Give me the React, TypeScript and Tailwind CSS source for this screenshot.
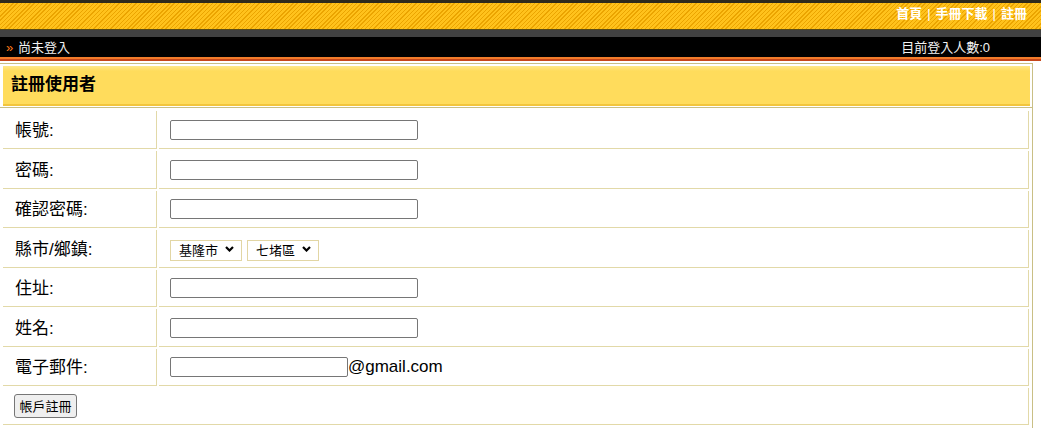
import { useState } from "react"

const font = "font-['Liberation_Sans','Noto_Sans_CJK_TC',sans-serif]"

function Chevron() {
  return (
    <svg width="9" height="6" viewBox="0 0 9 6" className="pointer-events-none absolute right-[8px] top-[8px]">
      <path d="M1 1l3.5 3.5L8 1" fill="none" stroke="#000" strokeWidth="2.2" />
    </svg>
  )
}

function Select({ value }: { value: string }) {
  return (
    <div className="relative w-[72px] h-[21px]">
      <select
        defaultValue={value}
        className="appearance-none w-full h-full border border-[#e2d6a4] bg-white pl-[8px] text-[13px] leading-none text-black outline-none"
      >
        <option>{value}</option>
      </select>
      <Chevron />
    </div>
  )
}

function TextInput({ w = "w-[248px]" }: { w?: string }) {
  const [v, setV] = useState("")
  return (
    <input
      value={v}
      onChange={(e) => setV(e.target.value)}
      className={`${w} h-[20px] border border-[#767676] rounded-[2px] bg-white px-1 text-[13px] outline-none`}
    />
  )
}

const rows = [
  { label: "帳號:", h: "h-[38px]", kind: "text" },
  { label: "密碼:", h: "h-[38px]", kind: "text" },
  { label: "確認密碼:", h: "h-[37px]", kind: "text" },
  { label: "縣市/鄉鎮:", h: "h-[38px]", kind: "select" },
  { label: "住址:", h: "h-[37px]", kind: "text" },
  { label: "姓名:", h: "h-[38px]", kind: "text" },
  { label: "電子郵件:", h: "h-[37px]", kind: "email" },
]

export default function App() {
  return (
    <div className={`w-[1041px] h-[432px] bg-white overflow-hidden ${font}`}>
      {/* top bar */}
      <div className="h-[3px] bg-[#2e2a1c]" />
      <div className="h-[26px] bg-[repeating-linear-gradient(135deg,#eba400_0px,#eba400_1px,#ffc21c_1px,#ffc21c_3px)] flex justify-end items-start pt-[4px] pr-[14px]">
        <div className="flex items-center gap-[5px] text-[13px] font-bold text-white leading-none">
          <span>首頁</span>
          <span className="font-normal">|</span>
          <span>手冊下載</span>
          <span className="font-normal">|</span>
          <span>註冊</span>
        </div>
      </div>
      <div className="h-px bg-[#5c4c14]" />
      <div className="h-[7px] bg-[#414141]" />
      <div className="h-[20px] bg-black flex items-center justify-between pl-[6px] pr-[51px] text-[13px] text-[#f2f2f2] leading-none">
        <div className="flex items-center">
          <span className="text-[#ff7a1a] w-[12px]">»</span>
          <span>尚未登入</span>
        </div>
        <span>目前登入人數:0</span>
      </div>
      <div className="h-[2px] bg-[#f27b2a]" />
      <div className="h-[2px] bg-[#c5461a]" />
      <div className="h-[2px]" />

      {/* form box */}
      <div className="w-[1033px] border-t border-r border-[#c9bf85] pb-[3px]">
        <div className="pt-[2px] pl-[3px] pr-[2px] pb-px">
          <div className="h-[40px] bg-[linear-gradient(to_bottom,#ffe888_0px,#ffdc5c_5px,#ffdc5c_100%)] border-b-2 border-[#f2c53c] flex items-center pl-[8px]">
            <span className="text-[17px] font-bold text-black">註冊使用者</span>
          </div>
        </div>
        <div className="border-t border-[#c9bf85] pt-[3px] px-[3px]">
          <div className="grid grid-cols-[154px_870px] gap-[2px]">
            {rows.map((r) => (
              <div key={r.label} className="contents">
                <div className={`${r.h} border-r border-b border-[#e2d9a8] flex items-center pl-[12px] pt-[2px] text-[17px] text-black`}>
                  {r.label}
                </div>
                <div className={`${r.h} border-r border-b border-[#e2d9a8] flex items-center pl-[11px]`}>
                  {r.kind === "text" && <TextInput />}
                  {r.kind === "select" && (
                    <div className="flex items-center gap-[5px]">
                      <Select value="基隆市" />
                      <Select value="七堵區" />
                    </div>
                  )}
                  {r.kind === "email" && (
                    <div className="flex items-center">
                      <TextInput w="w-[178px]" />
                      <span className="text-[17px] text-black">@gmail.com</span>
                    </div>
                  )}
                </div>
              </div>
            ))}
            <div className="col-span-2 h-[37px] border-r border-b border-[#e2d9a8] flex items-center pl-[11px]">
              <button className="h-[24px] w-[63px] border border-[#767676] rounded-[3px] bg-[#efefef] text-[13px] text-black leading-none">
                帳戶註冊
              </button>
            </div>
          </div>
        </div>
      </div>
    </div>
  )
}
